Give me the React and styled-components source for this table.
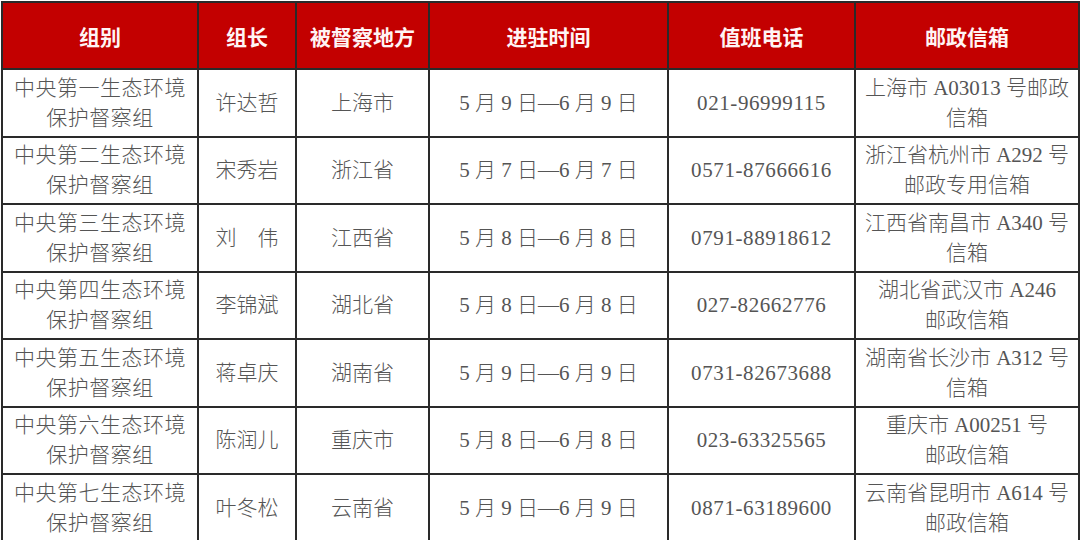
import React from 'react';
import styled, { createGlobalStyle } from 'styled-components';

const GlobalStyle = createGlobalStyle`
  html, body {
    margin: 0;
    padding: 0;
    background: #ffffff;
  }
`

const Page = styled.div`
  width: 1080px;
  height: 540px;
  overflow: hidden;
  background: #ffffff;
  padding: 1px 0 0 1px;
  box-sizing: border-box;
`

const Table = styled.table`
  width: 1077px;
  border-collapse: collapse;
  table-layout: fixed;
`

const HeadCell = styled.th`
  height: 65px;
  padding: 0;
  background: #c30000;
  color: #fff4f4;
  border: 2px solid #2a2a2a;
  font-family: "Noto Sans CJK SC", "Liberation Sans", sans-serif;
  font-weight: 700;
  font-size: 21px;
  text-align: center;
  vertical-align: middle;
`

const Cell = styled.td`
  height: 65.5px;
  padding: 0;
  border: 2px solid #2a2a2a;
  color: #555555;
  font-family: "Liberation Serif", "Noto Sans CJK SC", serif;
  font-weight: 300;
  font-size: 21px;
  line-height: 30px;
  text-align: center;
  vertical-align: middle;
  letter-spacing: ${props => props.$spaced ? '0.5px' : '0'};
  white-space: nowrap;
`

// phone numbers in the picture use wide, evenly spaced digits
const Phone = styled.span`
  letter-spacing: 0.6px;
`

const columns = [
  { title: '组别', width: 196 },
  { title: '组长', width: 98 },
  { title: '被督察地方', width: 133 },
  { title: '进驻时间', width: 239 },
  { title: '值班电话', width: 187 },
  { title: '邮政信箱', width: 224 },
];

const rows = [
  ['中央第一生态环境', '许达哲', '上海市', '5 月 9 日—6 月 9 日', '021-96999115', ['上海市 A03013 号邮政', '信箱']],
  ['中央第二生态环境', '宋秀岩', '浙江省', '5 月 7 日—6 月 7 日', '0571-87666616', ['浙江省杭州市 A292 号', '邮政专用信箱']],
  ['中央第三生态环境', '刘\u3000伟', '江西省', '5 月 8 日—6 月 8 日', '0791-88918612', ['江西省南昌市 A340 号', '信箱']],
  ['中央第四生态环境', '李锦斌', '湖北省', '5 月 8 日—6 月 8 日', '027-82662776', ['湖北省武汉市 A246', '邮政信箱']],
  ['中央第五生态环境', '蒋卓庆', '湖南省', '5 月 9 日—6 月 9 日', '0731-82673688', ['湖南省长沙市 A312 号', '信箱']],
  ['中央第六生态环境', '陈润儿', '重庆市', '5 月 8 日—6 月 8 日', '023-63325565', ['重庆市 A00251 号', '邮政信箱']],
  ['中央第七生态环境', '叶冬松', '云南省', '5 月 9 日—6 月 9 日', '0871-63189600', ['云南省昆明市 A614 号', '邮政信箱']],
];

function Lines({ lines }) {
  return lines.map((line, i) => (
    <React.Fragment key={i}>
      {i > 0 && <br />}
      {line}
    </React.Fragment>
  ));
}

export default function App() {
  return (
    <Page>
      <GlobalStyle />
      <Table>
        <colgroup>
          {columns.map(c => <col key={c.title} style={{ width: c.width }} />)}
        </colgroup>
        <thead>
          <tr>
            {columns.map(c => <HeadCell key={c.title}>{c.title}</HeadCell>)}
          </tr>
        </thead>
        <tbody>
          {rows.map((r, i) => (
            <tr key={i}>
              <Cell $spaced><Lines lines={[r[0], '保护督察组']} /></Cell>
              <Cell>{r[1]}</Cell>
              <Cell>{r[2]}</Cell>
              <Cell>{r[3]}</Cell>
              <Cell><Phone>{r[4]}</Phone></Cell>
              <Cell><Lines lines={r[5]} /></Cell>
            </tr>
          ))}
        </tbody>
      </Table>
    </Page>
  );
}
